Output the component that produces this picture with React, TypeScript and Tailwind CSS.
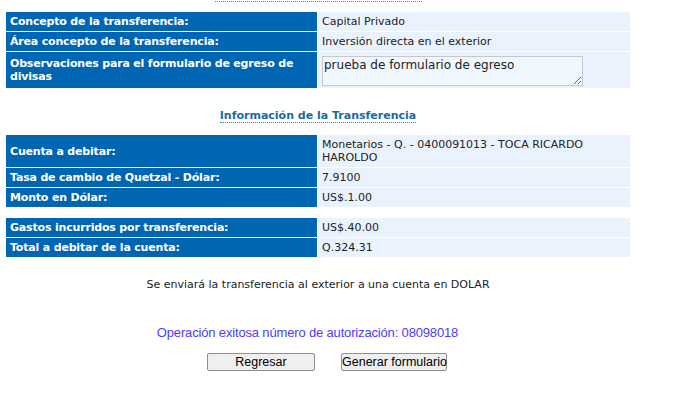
const label =
  "bg-[#0066b3] px-[4px] text-left align-middle font-bold tracking-[-0.18px] text-white";
const value = "bg-[#eaf3fd] px-[4px] align-middle text-[#222]";

function Row({
  name,
  children,
  h = "h-[19px]",
}: {
  name: string;
  children: React.ReactNode;
  h?: string;
}) {
  return (
    <tr className={h}>
      <td className={`${label} w-[311px]`}>{name}</td>
      <td className={value}>{children}</td>
    </tr>
  );
}

export default function App() {
  return (
    <div className="w-[700px] h-[407px] bg-white font-['DejaVu_Sans',sans-serif] text-[11px] leading-[13px] overflow-hidden">
      <div className="w-[636px]">
        <div className="ml-[215px] h-[2px] w-[207px] border-b border-dotted border-[#3a87c0]" />

        <table className="ml-[5px] mt-[9px] w-[626px] border-separate border-spacing-[1px]">
          <tbody>
            <Row name="Concepto de la transferencia:">Capital Privado</Row>
            <Row name="Área concepto de la transferencia:">
              Inversión directa en el exterior
            </Row>
            <tr className="h-[36px]">
              <td className={`${label} w-[311px]`}>
                Observaciones para el formulario de egreso de divisas
              </td>
              <td className={`${value} pt-[2px]`}>
                <textarea
                  readOnly
                  defaultValue="prueba de formulario de egreso"
                  className="block h-[30px] w-[261px] resize-y border border-[#c8c8c8] bg-[#f0f7fe] px-[1px] py-[1px] text-[12px] leading-[14px] text-[#222] outline-none"
                />
              </td>
            </tr>
          </tbody>
        </table>

        <div className="mt-[20px] flex justify-center">
          <span className="border-b border-dotted border-[#3a87c0] font-bold text-[11px] leading-[13px] text-[#1a6aa3]">
            Información de la Transferencia
          </span>
        </div>

        <table className="ml-[5px] mt-[11px] w-[626px] border-separate border-spacing-[1px]">
          <tbody>
            <Row name="Cuenta a debitar:" h="h-[32px]">
              Monetarios - Q. - 0400091013 - TOCA RICARDO HAROLDO
            </Row>
            <Row name="Tasa de cambio de Quetzal - Dólar:">7.9100</Row>
            <Row name="Monto en Dólar:">US$.1.00</Row>
          </tbody>
        </table>

        <table className="ml-[5px] mt-[9px] w-[626px] border-separate border-spacing-[1px]">
          <tbody>
            <Row name="Gastos incurridos por transferencia:">US$.40.00</Row>
            <Row name="Total a debitar de la cuenta:">Q.324.31</Row>
          </tbody>
        </table>

        <p className="mt-[20px] text-center text-[11px] leading-[13px] text-[#222]">
          Se enviará la transferencia al exterior a una cuenta en DOLAR
        </p>

        <p className="mt-[34px] pr-[21px] text-center font-['Liberation_Sans',sans-serif] text-[13px] leading-[15px] tracking-[-0.16px] text-[#4b3cff]">
          Operación exitosa número de autorización: 08098018
        </p>

        <div className="mt-[13px] flex justify-center gap-[26px] pl-[18px]">
          <button className="h-[18px] w-[108px] whitespace-nowrap rounded-[2px] border border-[#8f8f8f] bg-[#efefef] font-['Liberation_Sans',sans-serif] text-[12.5px] leading-[14px] text-black">
            Regresar
          </button>
          <button className="h-[18px] w-[106px] whitespace-nowrap rounded-[2px] border border-[#8f8f8f] bg-[#efefef] font-['Liberation_Sans',sans-serif] text-[12.5px] leading-[14px] text-black">
            Generar formulario
          </button>
        </div>
      </div>
    </div>
  );
}
